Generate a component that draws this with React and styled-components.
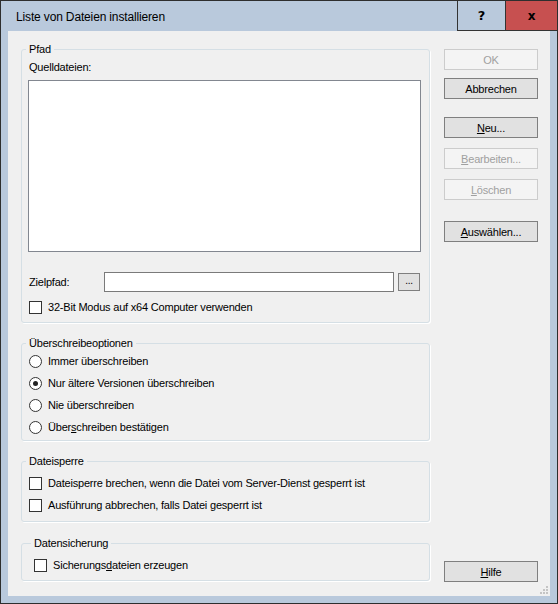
import React from 'react';
import styled, { createGlobalStyle } from 'styled-components';

const GlobalStyle = createGlobalStyle`
  html, body {
    margin: 0;
    padding: 0;
    background: #ffffff;
  }
  body {
    font-family: "Liberation Sans", Arial, sans-serif;
    font-size: 11px;
    letter-spacing: -0.2px;
    color: #000;
  }
`;

const Window = styled.div`
  width: 558px;
  height: 604px;
  box-sizing: border-box;
  border: 1px solid #2e2e2e;
  background: #b9c9dc;
  display: flex;
  flex-direction: column;
`;

const TitleBar = styled.div`
  height: 30px;
  display: flex;
  align-items: stretch;
`;

const Title = styled.div`
  flex: 1;
  display: flex;
  align-items: center;
  padding-left: 15px;
  padding-top: 1px;
  font-size: 12px;
  letter-spacing: -0.15px;
`;

const CaptionButton = styled.div`
  width: ${p => p.$w}px;
  box-sizing: border-box;
  border-left: 1px solid #333;
  border-bottom: 1px solid #333;
  background: ${p => (p.$close ? '#c75050' : 'transparent')};
  display: flex;
  align-items: center;
  justify-content: center;
  font-family: "DejaVu Sans", sans-serif;
  font-weight: bold;
  font-size: ${p => (p.$close ? 12 : 13)}px;
  color: #000;
`;

const Frame = styled.div`
  flex: 1;
  display: flex;
  padding: 0 7px 7px;
`;

const Client = styled.div`
  flex: 1;
  position: relative;
  background: #f0f0f0;
  display: flex;
  gap: 14px;
  padding: 0 12px 0 13px;
`;

const LeftColumn = styled.div`
  width: 409px;
  display: flex;
  flex-direction: column;
  gap: 13px;
  padding-top: 11px;
`;

const Group = styled.fieldset`
  margin: ${p => p.$mt || 0}px 0 0;
  padding: ${p => p.$pt}px 8px ${p => p.$pb}px ${p => p.$pl || 7}px;
  border: 1px solid #d5dfe5;
  border-radius: 3px;
  box-shadow: 1px 1px 0 #ffffff;
  min-width: 0;
`;

const Legend = styled.legend`
  padding: 0 3px;
  margin-left: -3px;
  line-height: 14px;
`;

const Caption = styled.div`
  line-height: 14px;
`;

const ListBox = styled.div`
  margin: 6px 0 0 -1px;
  width: 393px;
  height: 172px;
  box-sizing: border-box;
  background: #fff;
  border: 1px solid #828790;
`;

const FieldRow = styled.div`
  margin-top: 20px;
  height: 20px;
  display: flex;
  align-items: center;
`;

const FieldLabel = styled.span`
  width: 75px;
`;

const TextInput = styled.div`
  width: 290px;
  height: 20px;
  box-sizing: border-box;
  background: #fff;
  border: 1px solid #7a7a7a;
`;

const BrowseButton = styled.div`
  margin-left: 4px;
  width: 22px;
  height: 18px;
  box-sizing: border-box;
  background: #e1e1e1;
  border: 1px solid #7f7f7f;
  display: flex;
  align-items: center;
  justify-content: center;
  font-size: 10px;
  line-height: 10px;
  padding-bottom: 2px;
`;

const OptionRow = styled.div`
  height: ${p => p.$h || 22}px;
  margin-top: ${p => p.$mt || 0}px;
  display: flex;
  align-items: center;
  gap: 6px;
  white-space: nowrap;
`;

const CheckBox = styled.span`
  width: 13px;
  height: 13px;
  box-sizing: border-box;
  flex: none;
  background: #fff;
  border: 1px solid #333;
`;

const Radio = styled.span`
  width: 13px;
  height: 13px;
  box-sizing: border-box;
  flex: none;
  background: #fff;
  border: 1px solid #333;
  border-radius: 50%;
  display: flex;
  align-items: center;
  justify-content: center;

  &::after {
    content: '';
    width: 5px;
    height: 5px;
    border-radius: 50%;
    background: ${p => (p.$checked ? '#222' : 'transparent')};
  }
`;

const RightColumn = styled.div`
  width: 94px;
  display: flex;
  flex-direction: column;
  padding: 18px 0 14px;
`;

const Button = styled.div`
  height: 21px;
  box-sizing: border-box;
  margin-top: ${p => (p.$mt === 'auto' ? 'auto' : `${p.$mt || 0}px`)};
  display: flex;
  align-items: center;
  justify-content: center;
  background: ${p => (p.$disabled ? '#f4f4f4' : '#e1e1e1')};
  border: 1px solid ${p => (p.$disabled ? '#cccccc' : '#7f7f7f')};
  color: ${p => (p.$disabled ? '#a0a0a0' : '#000')};
`;

const Grip = styled.svg`
  position: absolute;
  right: 2px;
  bottom: 2px;
`;

const SizeGrip = () => (
  <Grip width="10" height="10" viewBox="0 0 10 10">
    {[[8, 0], [5, 3], [8, 3], [2, 6], [5, 6], [8, 6]].map(([x, y]) => (
      <rect key={`${x}-${y}`} x={x} y={y + 2} width="2" height="2" fill="#c4c4c4" />
    ))}
  </Grip>
);

const Check = ({ children, mt, h }) => (
  <OptionRow $mt={mt} $h={h}>
    <CheckBox />
    <span>{children}</span>
  </OptionRow>
);

const Option = ({ children, checked }) => (
  <OptionRow>
    <Radio $checked={checked} />
    <span>{children}</span>
  </OptionRow>
);

export default function App() {
  return (
    <>
      <GlobalStyle />
      <Window>
        <TitleBar>
          <Title>Liste von Dateien installieren</Title>
          <CaptionButton $w={48}>?</CaptionButton>
          <CaptionButton $w={52} $close>x</CaptionButton>
        </TitleBar>
        <Frame>
          <Client>
            <LeftColumn>
              <Group $pt={4} $pb={8}>
                <Legend>Pfad</Legend>
                <Caption>Quelldateien:</Caption>
                <ListBox />
                <FieldRow>
                  <FieldLabel>Zielpfad:</FieldLabel>
                  <TextInput />
                  <BrowseButton>...</BrowseButton>
                </FieldRow>
                <Check mt={8} h={14}>32-Bit Modus auf x64 Computer verwenden</Check>
              </Group>

              <Group $pt={0} $pb={2}>
                <Legend>Überschreibeoptionen</Legend>
                <Option>Immer überschreiben</Option>
                <Option checked>Nur ältere Versionen überschreiben</Option>
                <Option>Nie überschreiben</Option>
                <Option>Über<u>s</u>chreiben bestätigen</Option>
              </Group>

              <Group $pt={4} $pb={5}>
                <Legend>Dateisperre</Legend>
                <Check>Dateisperre brechen, wenn die Datei vom Server-Dienst gesperrt ist</Check>
                <Check>Ausführung abbrechen, falls Datei gesperrt ist</Check>
              </Group>

              <Group $pt={4} $pb={4} $pl={12} $mt={1}>
                <Legend>Datensicherung</Legend>
                <Check>Sicherungs<u>d</u>ateien erzeugen</Check>
              </Group>
            </LeftColumn>

            <RightColumn>
              <Button $disabled>OK</Button>
              <Button $mt={8}>Abbrechen</Button>
              <Button $mt={18}><span><u>N</u>eu...</span></Button>
              <Button $mt={10} $disabled><span><u>B</u>earbeiten...</span></Button>
              <Button $mt={10} $disabled><span><u>L</u>öschen</span></Button>
              <Button $mt={21}><span><u>A</u>uswählen...</span></Button>
              <Button $mt="auto"><span><u>H</u>ilfe</span></Button>
            </RightColumn>
            <SizeGrip />
          </Client>
        </Frame>
      </Window>
    </>
  );
}
